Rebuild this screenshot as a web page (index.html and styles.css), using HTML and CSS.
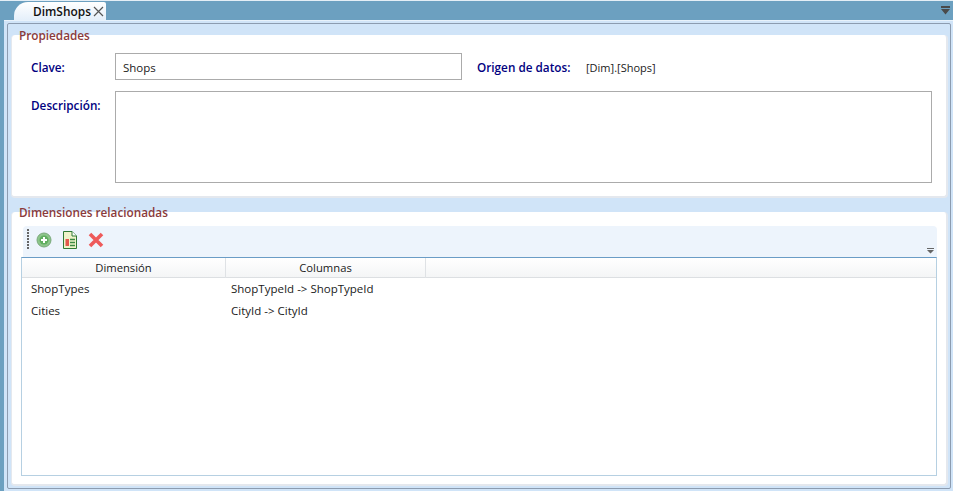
FILE: index.html
```html
<!DOCTYPE html>
<html lang="es">
<head>
  <meta charset="UTF-8" />
  <title>DimShops</title>
  <link rel="stylesheet" href="styles.css">
</head>
<body>
  <div class="tabstrip">
    <div class="tab">
      <span>DimShops</span>
      <svg class="tab-close" width="11" height="11" viewBox="0 0 11 11"><path d="M1 1L10 10M10 1L1 10" stroke="#555" stroke-width="1.2" fill="none"/></svg>
    </div>
    <svg class="tab-menu" width="9" height="9" viewBox="0 0 9 9"><path d="M0 0H9V2H0ZM0 3H9L4.500 8.500Z" fill="#4a4a4a"/></svg>
  </div>

  <div class="frame">
    <div class="inner">
      <div class="legend legend-first"><span>Propiedades</span></div>
      <section class="panel panel-props">
        <div class="row-key">
          <label class="label label-key">Clave:</label>
          <div class="input">Shops</div>
          <label class="label label-source">Origen de datos:</label>
          <span class="source">[Dim].[Shops]</span>
        </div>
        <div class="row-desc">
          <label class="label label-key">Descripción:</label>
          <div class="textarea"></div>
        </div>
      </section>

      <div class="legend legend-second"><span>Dimensiones relacionadas</span></div>
      <section class="panel panel-dims">
        <div class="toolbar">
          <div class="grip"></div>
          <svg class="tool" width="16" height="18" viewBox="0 0 16 18">
            <circle cx="8" cy="9" r="7" fill="#8cc58a" stroke="#7aa97c"/>
            <circle cx="8" cy="9" r="4.500" fill="#5fae5f"/>
            <path d="M8 6V12M5 9H11" stroke="#fff" stroke-width="2"/>
          </svg>
          <svg class="tool" width="16" height="18" viewBox="0 0 16 18">
            <path d="M1.500 .5H10L14.500 5V17.500H1.500Z" fill="#eef3c8" stroke="#2f7a35"/>
            <path d="M10 .5V5H14.500" fill="#fff" stroke="#2f7a35"/>
            <rect x="3.500" y="8" width="3.500" height="7" fill="#e2574c"/>
            <path d="M8 8.500H13M8 11.500H13M8 14.500H13" stroke="#3d8a45" stroke-width="1.400"/>
          </svg>
          <svg class="tool" width="16" height="18" viewBox="0 0 16 18"><path d="M2 3L14 15M14 3L2 15" stroke="#ee5a5a" stroke-width="3.600"/></svg>
          <svg class="overflow" width="7" height="6" viewBox="0 0 7 6"><path d="M0 0H7V1H0ZM0 2H7L3.500 5.500Z" fill="#666"/></svg>
        </div>
        <div class="grid">
          <div class="grid-head">
            <div class="col">Dimensión</div>
            <div class="col">Columnas</div>
            <div></div>
          </div>
          <div class="grid-row"><div>ShopTypes</div><div>ShopTypeId -&gt; ShopTypeId</div></div>
          <div class="grid-row"><div>Cities</div><div>CityId -&gt; CityId</div></div>
        </div>
      </section>
    </div>
  </div>
</body>
</html>
```

FILE: styles.css
```css
* {
  box-sizing: border-box;
}
html, body {
  height: 100%;
}
body {
  margin: 0;
  background-color: #6ca0c0;
  color: #1a1a1a;
  font-family: "Open Sans", "Noto Sans", Arial, sans-serif;
  font-size: 11.5px;
  overflow: hidden;
}

/* tabs */
.tabstrip {
  height: 20px;
  padding: 1px 3px 0 14px;
  display: flex;
  justify-content: space-between;
  align-items: flex-start;
  border-top: 1px solid #e4eef6;
}
.tab {
  width: 92px;
  height: 18px;
  padding-left: 19px;
  display: flex;
  align-items: center;
  gap: 2px;
  background: linear-gradient(#ffffff, #e4effa);
  border-radius: 14px 2px 0 0;
  font-weight: 600;
  color: #111;
  font-size: 11.9px;
}
.tab-close {
  flex: none;
}
.tab-menu {
  margin-top: 4px;
}

/* outer frame */
.frame {
  height: 471px;
  margin-left: 4px;
  padding: 2px 2px 2px 3px;
  background-color: #d0e4f8;
  border-top: 1px solid #e8f2fb;
}
.inner {
  height: 100%;
  padding: 0 2px 2px 3px;
  border: 1px solid #8c9cb0;
  border-radius: 2px;
  display: flex;
  flex-direction: column;
  background-color: #d0e4f8;
}
.legend {
  height: 15px;
  padding-left: 8px;
  position: relative;
  z-index: 1;
  line-height: 15px;
}
.legend-first {
  margin-top: 4px;
  margin-bottom: -8px;
}
.legend-second {
  margin-top: 7px;
  margin-bottom: -8px;
}
.legend span {
  display: inline-block;
  height: 15px;
  padding-right: 3px;
  color: #8b3a3a;
  font-weight: 600;
  font-size: 11.75px;
}
.panel {
  background-color: #fff;
  border-right: 2px solid #e4e8ee;
  border-bottom: 2px solid #e4e8ee;
  border-left: 1px solid #e4e8ee;
  border-radius: 4px;
}

/* properties */
.panel-props {
  height: 163px;
  padding: 18px 14px 0 19px;
}
.row-key {
  display: flex;
  align-items: center;
  height: 27px;
}
.row-desc {
  display: flex;
  align-items: flex-start;
  margin-top: 11px;
}
.label {
  color: #000080;
  font-weight: 600;
  font-size: 11.75px;
}
.label-key {
  width: 84px;
  flex: none;
}
.row-desc .label {
  margin-top: 6px;
}
.label-source {
  width: 109px;
  margin-left: 15px;
}
.source {
  margin-top: 1px;
  font-size: 11px;
}
.input {
  width: 347px;
  height: 27px;
  padding-left: 7px;
  line-height: 27px;
  border: 1px solid #ababab;
}
.textarea {
  width: 817px;
  height: 92px;
  border: 1px solid #ababab;
}

/* related dimensions */
.panel-dims {
  flex: 1;
  padding: 14px 9px 8px 9px;
  display: flex;
  flex-direction: column;
}
.toolbar {
  height: 31px;
  margin-left: 2px;
  padding: 3px 0 0 4px;
  display: flex;
  align-items: flex-start;
  background-color: #edf4fc;
  border-radius: 4px 4px 0 0;
  position: relative;
}
.grip {
  width: 2px;
  height: 20px;
  margin-right: 7px;
  background: repeating-linear-gradient(#666 0 2px, transparent 2px 3px);
}
.tool {
  margin: 2px 10px 0 0;
}
.overflow {
  position: absolute;
  right: 3px;
  bottom: 3px;
}
.grid {
  flex: 1;
  border: 1px solid #b6d0e2;
  border-top-color: #6a9cc6;
}
.grid-head {
  height: 20px;
  display: grid;
  grid-template-columns: 204px 200px 1fr;
  background: linear-gradient(#ffffff, #f4f5f6);
  border-bottom: 1px solid #dcdfe2;
  font-size: 11.25px;
}
.col {
  line-height: 20px;
  text-align: center;
  border-right: 1px solid #dfe2e5;
}
.grid-row {
  height: 22px;
  line-height: 22px;
  padding-left: 9px;
  display: grid;
  grid-template-columns: 200px 1fr;
}
```
